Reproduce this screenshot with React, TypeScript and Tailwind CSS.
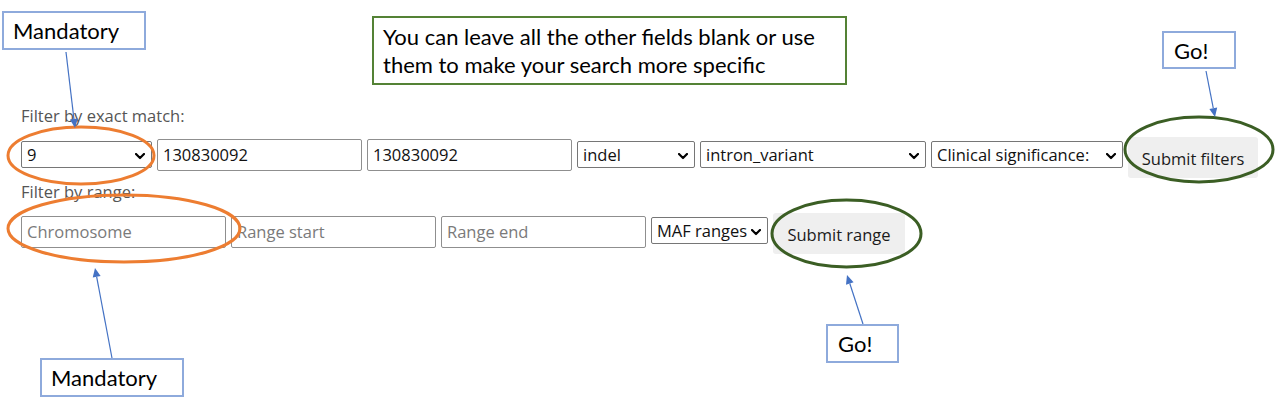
const formFont = { fontFamily: '"Open Sans", "Noto Sans", sans-serif' };
const noteFont = { fontFamily: 'Lato, "Open Sans", sans-serif' };

function Chevron() {
  return (
    <svg className="absolute right-[6px] top-[11px]" width="10" height="7" viewBox="0 0 10 7">
      <polyline points="1,1 5,5 9,1" fill="none" stroke="#000" strokeWidth={2.2} strokeLinecap="round" strokeLinejoin="round" />
    </svg>
  );
}

function Select({ value, width, top }: { value: string; width: string; top: string }) {
  return (
    <div className={`relative h-[27px] ${width} ${top} border border-[#767676] rounded-[2px] bg-white`}>
      <div className="pl-[5px] leading-[25px] text-[16.5px] text-[#111] whitespace-nowrap">{value}</div>
      <Chevron />
    </div>
  );
}

function Field({ value, placeholder, top }: { value?: string; placeholder?: string; top: string }) {
  return (
    <div className={`h-[32px] w-[205px] ${top} border border-[#8f8f8f] rounded-[2px] bg-white pl-[5px] leading-[30px] text-[16.5px] whitespace-nowrap`}>
      {value ? <span className="text-[#111]">{value}</span> : <span className="text-[#7a7a7a]">{placeholder}</span>}
    </div>
  );
}

function Button({ label, width }: { label: string; width: string }) {
  return (
    <button className={`h-[41px] ${width} bg-[#efefef] rounded-[3px] text-[16.5px] text-[#1b1b1b] pt-[3px]`}>{label}</button>
  );
}

function Note({ children, className }: { children: React.ReactNode; className: string }) {
  return (
    <div className={`absolute bg-white border-2 text-[22px] text-black leading-[28px] ${className}`} style={noteFont}>
      {children}
    </div>
  );
}

function Arrow({ x1, y1, x2, y2 }: { x1: number; y1: number; x2: number; y2: number }) {
  const a = Math.atan2(y2 - y1, x2 - x1);
  const len = 9;
  const w = 4;
  const bx = x2 - len * Math.cos(a);
  const by = y2 - len * Math.sin(a);
  const px = -Math.sin(a) * w;
  const py = Math.cos(a) * w;
  return (
    <g>
      <line x1={x1} y1={y1} x2={bx} y2={by} stroke="#4472c4" strokeWidth={1.2} />
      <polygon points={`${x2},${y2} ${bx + px},${by + py} ${bx - px},${by - py}`} fill="#4472c4" />
    </g>
  );
}

export default function App() {
  return (
    <div className="relative w-[1280px] h-[410px] bg-white overflow-hidden">
      <div className="pt-[103px] pl-[21px]" style={formFont}>
        <div className="h-[26px] leading-[26px] text-[16.5px] text-[#555]">Filter by exact match:</div>
        <div className="mt-[8px] flex items-start gap-[5px]">
          <Select value="9" width="w-[131px]" top="mt-[4px]" />
          <Field value="130830092" top="mt-[2px]" />
          <Field value="130830092" top="mt-[2px]" />
          <Select value="indel" width="w-[118px]" top="mt-[4px]" />
          <Select value="intron_variant" width="w-[226px]" top="mt-[4px]" />
          <Select value="Clinical significance:" width="w-[192px]" top="mt-[4px]" />
          <Button label="Submit filters" width="w-[130px]" />
        </div>
        <div className="mt-[1px] h-[26px] leading-[26px] text-[16.5px] text-[#555]">Filter by range:</div>
        <div className="mt-[8px] flex items-start gap-[5px]">
          <Field placeholder="Chromosome" top="mt-[3px]" />
          <Field placeholder="Range start" top="mt-[3px]" />
          <Field placeholder="Range end" top="mt-[3px]" />
          <Select value="MAF ranges" width="w-[117px]" top="mt-[4px]" />
          <Button label="Submit range" width="w-[132px]" />
        </div>
      </div>

      <svg className="absolute inset-0 pointer-events-none" width="1280" height="410">
        <ellipse cx={81} cy={155.5} rx={73} ry={28.5} fill="none" stroke="#ed7d31" strokeWidth={3} />
        <ellipse cx={124} cy={228.5} rx={116} ry={33.5} fill="none" stroke="#ed7d31" strokeWidth={3} />
        <ellipse cx={1199} cy={149.5} rx={74} ry={32.5} fill="none" stroke="#3b5e24" strokeWidth={3} />
        <ellipse cx={846.5} cy={233.5} rx={74.5} ry={33.5} fill="none" stroke="#3b5e24" strokeWidth={3} />
        <Arrow x1={66} y1={52} x2={75} y2={128} />
        <Arrow x1={112} y1={358} x2={95} y2={268} />
        <Arrow x1={1206} y1={71} x2={1215} y2={117} />
        <Arrow x1={863} y1={324} x2={847} y2={275} />
      </svg>

      <Note className="left-[2px] top-[11px] w-[144px] h-[39px] border-[#8eaadc] pl-[9px] pt-[4px]">Mandatory</Note>
      <Note className="left-[372px] top-[16px] w-[475px] h-[69px] border-[#548235] pl-[9px] pt-[5px]">
        You can leave all the other fields blank or use
        <br />
        them to make your search more specific
      </Note>
      <Note className="left-[1162px] top-[31px] w-[74px] h-[38px] border-[#8eaadc] pl-[10px] pt-[4px]">Go!</Note>
      <Note className="left-[40px] top-[358px] w-[144px] h-[39px] border-[#8eaadc] pl-[9px] pt-[4px]">Mandatory</Note>
      <Note className="left-[826px] top-[324px] w-[73px] h-[39px] border-[#8eaadc] pl-[10px] pt-[4px]">Go!</Note>
    </div>
  );
}
